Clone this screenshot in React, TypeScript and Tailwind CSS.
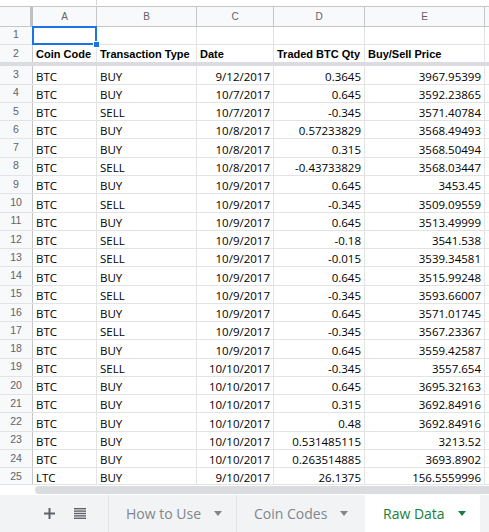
import React from 'react'

type Row = [string, string, string, string, string]

const rows: Row[] = [
  ['BTC', 'BUY', '9/12/2017', '0.3645', '3967.95399'],
  ['BTC', 'BUY', '10/7/2017', '0.645', '3592.23865'],
  ['BTC', 'SELL', '10/7/2017', '-0.345', '3571.40784'],
  ['BTC', 'BUY', '10/8/2017', '0.57233829', '3568.49493'],
  ['BTC', 'BUY', '10/8/2017', '0.315', '3568.50494'],
  ['BTC', 'SELL', '10/8/2017', '-0.43733829', '3568.03447'],
  ['BTC', 'BUY', '10/9/2017', '0.645', '3453.45'],
  ['BTC', 'SELL', '10/9/2017', '-0.345', '3509.09559'],
  ['BTC', 'BUY', '10/9/2017', '0.645', '3513.49999'],
  ['BTC', 'SELL', '10/9/2017', '-0.18', '3541.538'],
  ['BTC', 'SELL', '10/9/2017', '-0.015', '3539.34581'],
  ['BTC', 'BUY', '10/9/2017', '0.645', '3515.99248'],
  ['BTC', 'SELL', '10/9/2017', '-0.345', '3593.66007'],
  ['BTC', 'BUY', '10/9/2017', '0.645', '3571.01745'],
  ['BTC', 'SELL', '10/9/2017', '-0.345', '3567.23367'],
  ['BTC', 'BUY', '10/9/2017', '0.645', '3559.42587'],
  ['BTC', 'SELL', '10/10/2017', '-0.345', '3557.654'],
  ['BTC', 'BUY', '10/10/2017', '0.645', '3695.32163'],
  ['BTC', 'BUY', '10/10/2017', '0.315', '3692.84916'],
  ['BTC', 'BUY', '10/10/2017', '0.48', '3692.84916'],
  ['BTC', 'BUY', '10/10/2017', '0.531485115', '3213.52'],
  ['BTC', 'BUY', '10/10/2017', '0.263514885', '3693.8902'],
  ['LTC', 'BUY', '9/10/2017', '26.1375', '156.5559996'],
]

// widths incl. right border: A 64, B 100, C 77, D 91, E 120
const colW = ['w-[64px]', 'w-[100px]', 'w-[77px]', 'w-[91px]', 'w-[120px]']
const rightAligned = [false, false, true, true, true]
const headers = ['Coin Code', 'Transaction Type', 'Date', 'Traded BTC Qty', 'Buy/Sell Price']

const cellFont = { fontFamily: '"Open Sans", "Liberation Sans", sans-serif' }
const boldFont = { fontFamily: '"Liberation Sans", Arial, sans-serif' }
const uiFont = { fontFamily: '"Open Sans", Roboto, sans-serif' }

function RowHead({ n }: { n: number }) {
  return (
    <div
      className="w-[33px] shrink-0 h-full flex items-center justify-center bg-[#f8f9fa] border-r border-[#c4c7c5] text-[10.5px] text-[#5f6368]"
      style={boldFont}
    >
      {n}
    </div>
  )
}

function Caret({ color }: { color: string }) {
  return (
    <svg width="8" height="5" viewBox="0 0 8 5" className="ml-[13px]">
      <path d="M0 0h8L4 5z" fill={color} />
    </svg>
  )
}

export default function App() {
  return (
    <div className="w-[489px] h-[532px] flex flex-col bg-white overflow-hidden select-none">
      {/* cropped toolbar remnant */}
      <div className="h-[6px] shrink-0 flex">
        <div className="w-[96px]" />
        <div className="w-px h-[5px] bg-[#d5d5d5]" />
      </div>

      {/* column letters */}
      <div className="h-[21px] shrink-0 flex bg-[#f8f9fa] border-y border-[#c4c7c5]">
        <div className="w-[33px] shrink-0 flex">
          <div className="flex-1" />
          <div className="w-[3px] bg-[#bdc1c6]" />
        </div>
        {['A', 'B', 'C', 'D', 'E'].map((c, i) => (
          <div
            key={c}
            className={`${colW[i]} shrink-0 flex items-center justify-center border-r border-[#c4c7c5] text-[10px] text-[#5f6368]`}
            style={boldFont}
          >
            {c}
          </div>
        ))}
        <div className="flex-1" />
      </div>

      {/* frozen rows */}
      <div className="h-[17.7px] shrink-0 flex border-b border-[#e2e3e3]">
        <RowHead n={1} />
        {colW.map((w, i) => (
          <div key={i} className={`${w} shrink-0 border-r border-[#e2e3e3] relative`}>
            {i === 0 && (
              <div className="absolute -left-px -top-px -right-px -bottom-px border-2 border-[#1a73e8] z-10">
                <div className="absolute -right-[5px] -bottom-[5px] w-[7px] h-[7px] bg-[#1a73e8] border border-white" />
              </div>
            )}
          </div>
        ))}
      </div>
      <div className="h-[17.7px] shrink-0 flex">
        <RowHead n={2} />
        {headers.map((h, i) => (
          <div
            key={h}
            className={`${colW[i]} shrink-0 border-r border-[#e2e3e3] px-[3px] flex items-end pb-[1px] text-[11px] font-bold text-black whitespace-nowrap overflow-hidden leading-[13px]`}
            style={boldFont}
          >
            {h}
          </div>
        ))}
      </div>
      <div className="h-[4px] shrink-0 bg-[#dadce0]" />

      {/* scrolling body */}
      <div className="flex-1 overflow-hidden">
        {rows.map((r, ri) => (
          <div key={ri} className="h-[18.27px] flex border-b border-[#e2e3e3]">
            <RowHead n={ri + 3} />
            {r.map((v, i) => (
              <div
                key={i}
                className={`${colW[i]} shrink-0 border-r border-[#e2e3e3] px-[3px] flex items-end ${rightAligned[i] ? 'justify-end' : ''} text-[11.5px] text-black whitespace-nowrap overflow-hidden leading-[14px]`}
                style={cellFont}
              >
                {v}
              </div>
            ))}
          </div>
        ))}
      </div>

      {/* horizontal scrollbar */}
      <div className="h-[11px] shrink-0 flex items-center bg-white border-t border-[#e2e3e3]">
        <div className="ml-[35px] flex-1 h-[8px] rounded-l-full bg-[#dadce0]" />
      </div>

      {/* sheet tabs */}
      <div className="h-[37px] shrink-0 flex bg-[#f1f3f4] text-[14px] font-medium" style={uiFont}>
        <div className="w-[109px] shrink-0 flex items-center border-r border-[#e3e4e6]">
          <svg width="11" height="11" viewBox="0 0 11 11" className="ml-[44px]">
            <path d="M4.5 0h2v4.5H11v2H6.5V11h-2V6.5H0v-2h4.5z" fill="#5f6368" />
          </svg>
          <svg width="12" height="11" viewBox="0 0 12 11" className="ml-[19px]">
            <rect y="0" width="12" height="1.4" fill="#5f6368" />
            <rect y="2.4" width="12" height="1.4" fill="#5f6368" />
            <rect y="4.8" width="12" height="1.4" fill="#5f6368" />
            <rect y="7.2" width="12" height="1.4" fill="#5f6368" />
            <rect y="9.6" width="12" height="1.4" fill="#5f6368" />
          </svg>
        </div>
        <div className="w-[128px] shrink-0 flex items-center pl-[17px] text-[#80868b] border-r border-[#e3e4e6]">
          How to Use
          <Caret color="#80868b" />
        </div>
        <div className="w-[128px] shrink-0 flex items-center pl-[17px] text-[#80868b]">
          Coin Codes
          <Caret color="#80868b" />
        </div>
        <div className="w-[115px] shrink-0 flex items-center pl-[18px] bg-white text-[#188038]">
          Raw Data
          <Caret color="#188038" />
        </div>
        <div className="flex-1" />
      </div>
    </div>
  )
}
